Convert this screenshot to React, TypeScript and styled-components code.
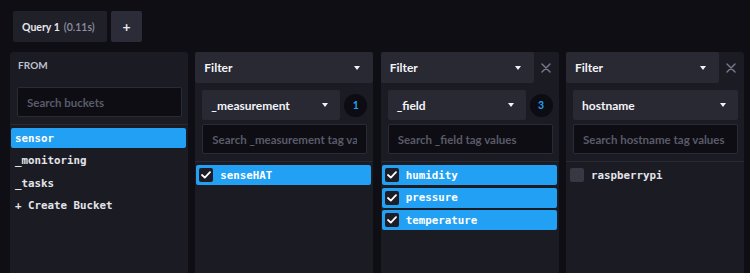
import React from "react";
import styled, { createGlobalStyle } from "styled-components";

const Global = createGlobalStyle`
  html, body { margin: 0; padding: 0; height: 100%; overflow: hidden; }
  body { background: #0f0e15; font-family: "Lato", "Open Sans", sans-serif; }
  #root { height: 100%; }
`;

const Page = styled.div`
  height: 100%;
  display: flex;
  flex-direction: column;
  padding: 11px 0 0 10px;
  box-sizing: border-box;
`;

const TabBar = styled.div`
  display: flex;
  gap: 4px;
  padding-left: 3px;
  height: 31px;
  margin-bottom: 10px;
`;

const Tab = styled.div`
  display: flex;
  align-items: center;
  width: 94px;
  box-sizing: border-box;
  padding-left: 9px;
  background: #202029;
  border-radius: 2px;
  color: #e7e8eb;
  font-size: 10.5px;
  font-weight: 700;
`;

const TabTime = styled.span`
  color: #8e90a0;
  font-weight: 600;
  margin-left: 4px;
`;

const PlusButton = styled.div`
  width: 31px;
  display: flex;
  align-items: center;
  justify-content: center;
  background: #2c2c39;
  border-radius: 2px;
  color: #e7e8eb;
  font-size: 14px;
  font-weight: 700;
`;

const Columns = styled.div`
  flex: 1;
  display: flex;
  gap: 7.33px;
  min-height: 0;
`;

const Panel = styled.div`
  width: 178px;
  background: #1b1b24;
  border-radius: 3px 3px 0 0;
  display: flex;
  flex-direction: column;
`;

const FromHeader = styled.div`
  height: 24px;
  padding: 2px 0 0 8px;
  box-sizing: border-box;
  color: #bec2cc;
  font-size: 10px;
  font-weight: 700;
  letter-spacing: 0.1px;
  display: flex;
  align-items: center;
`;

const Section = styled.div<{ $top: number }>`
  padding: ${(p) => p.$top}px 6px 7px 7px;
  border-bottom: 1px solid #2a2a35;
  display: flex;
  flex-direction: column;
  gap: 4px;
`;

const SearchBox = styled.div`
  height: 30px;
  box-sizing: border-box;
  background: #0d0d13;
  border: 1.5px solid #2b2b36;
  border-radius: 2px;
  display: flex;
  align-items: center;
  padding: 0 9px;
  color: #5a5b69;
  font-size: 11.5px;
  font-weight: 700;
`;

const Placeholder = styled.span`
  flex: 1;
  white-space: nowrap;
  overflow: hidden;
`;

const List = styled.div`
  padding: 3px 2px 0 1px;
  display: flex;
  flex-direction: column;
  gap: 2.5px;
`;

const Row = styled.div<{ $selected?: boolean }>`
  height: 20px;
  display: flex;
  align-items: center;
  gap: 7px;
  padding-left: 3px;
  border-radius: 2px;
  background: ${(p) => (p.$selected ? "#22a0f4" : "transparent")};
  color: ${(p) => (p.$selected ? "#ffffff" : "#e4e5ea")};
  font-family: "DejaVu Sans Mono", "Liberation Mono", monospace;
  font-size: 10.8px;
  font-weight: 700;
`;

const BucketText = styled.span`
  padding-left: 1px;
`;

const Box = styled.div<{ $checked?: boolean }>`
  width: 14px;
  height: 14px;
  border-radius: 2px;
  background: ${(p) => (p.$checked ? "#1d1d27" : "#383845")};
  display: flex;
  align-items: center;
  justify-content: center;
`;

const HeaderRow = styled.div`
  display: flex;
  height: 31px;
`;

const Dropdown = styled.div<{ $h: number; $pr: number }>`
  flex: 1;
  height: ${(p) => p.$h}px;
  background: #292934;
  border-radius: 2px;
  display: flex;
  align-items: center;
  justify-content: space-between;
  padding: 0 ${(p) => p.$pr}px 0 9px;
  color: #f3f4f6;
  font-size: 12px;
  font-weight: 700;
`;

const Caret = styled.span`
  width: 0;
  height: 0;
  border-left: 3.5px solid transparent;
  border-right: 3.5px solid transparent;
  border-top: 4px solid #f3f4f6;
`;

const CloseBtn = styled.div`
  width: 25px;
  display: flex;
  align-items: center;
  justify-content: center;
`;

const TagRow = styled.div`
  display: flex;
  align-items: center;
  gap: 4px;
`;

const Badge = styled.div`
  width: 23px;
  height: 23px;
  border-radius: 50%;
  background: #0c0c12;
  color: #22a0f4;
  font-size: 10.5px;
  font-weight: 700;
  display: flex;
  align-items: center;
  justify-content: center;
`;

const Check = () => (
  <svg width="10" height="8" viewBox="0 0 10 8">
    <polyline points="1,4 3.8,6.6 9,1.2" fill="none" stroke="#fff" strokeWidth="1.8" strokeLinecap="round" strokeLinejoin="round" />
  </svg>
);

const XIcon = () => (
  <svg width="10" height="10" viewBox="0 0 10 10">
    <path d="M1 1 L9 9 M9 1 L1 9" stroke="#767888" strokeWidth="1.5" strokeLinecap="round" />
  </svg>
);

type FilterProps = {
  tag: string;
  count?: number;
  closable?: boolean;
  placeholder: string;
  items: { label: string; checked: boolean }[];
};

const FilterPanel = ({ tag, count, closable, placeholder, items }: FilterProps) => (
  <Panel>
    <HeaderRow>
      <Dropdown $h={31} $pr={13}>
        Filter
        <Caret />
      </Dropdown>
      {closable && (
        <CloseBtn>
          <XIcon />
        </CloseBtn>
      )}
    </HeaderRow>
    <Section $top={7}>
      <TagRow>
        <Dropdown $h={30} $pr={12}>
          {tag}
          <Caret />
        </Dropdown>
        {count !== undefined && <Badge>{count}</Badge>}
      </TagRow>
      <SearchBox>
        <Placeholder>{placeholder}</Placeholder>
      </SearchBox>
    </Section>
    <List>
      {items.map((it) => (
        <Row key={it.label} $selected={it.checked}>
          <Box $checked={it.checked}>{it.checked && <Check />}</Box>
          {it.label}
        </Row>
      ))}
    </List>
  </Panel>
);

export default function App() {
  return (
    <>
      <Global />
      <Page>
        <TabBar>
          <Tab>
            Query 1<TabTime>(0.11s)</TabTime>
          </Tab>
          <PlusButton>+</PlusButton>
        </TabBar>
        <Columns>
          <Panel>
            <FromHeader>FROM</FromHeader>
            <Section $top={11}>
              <SearchBox>
                <Placeholder>Search buckets</Placeholder>
              </SearchBox>
            </Section>
            <List>
              <Row $selected>
                <BucketText>sensor</BucketText>
              </Row>
              <Row>
                <BucketText>_monitoring</BucketText>
              </Row>
              <Row>
                <BucketText>_tasks</BucketText>
              </Row>
              <Row>
                <BucketText>+ Create Bucket</BucketText>
              </Row>
            </List>
          </Panel>
          <FilterPanel
            tag="_measurement"
            count={1}
            placeholder="Search _measurement tag values"
            items={[{ label: "senseHAT", checked: true }]}
          />
          <FilterPanel
            tag="_field"
            count={3}
            closable
            placeholder="Search _field tag values"
            items={[
              { label: "humidity", checked: true },
              { label: "pressure", checked: true },
              { label: "temperature", checked: true },
            ]}
          />
          <FilterPanel
            tag="hostname"
            closable
            placeholder="Search hostname tag values"
            items={[{ label: "raspberrypi", checked: false }]}
          />
        </Columns>
      </Page>
    </>
  );
}
